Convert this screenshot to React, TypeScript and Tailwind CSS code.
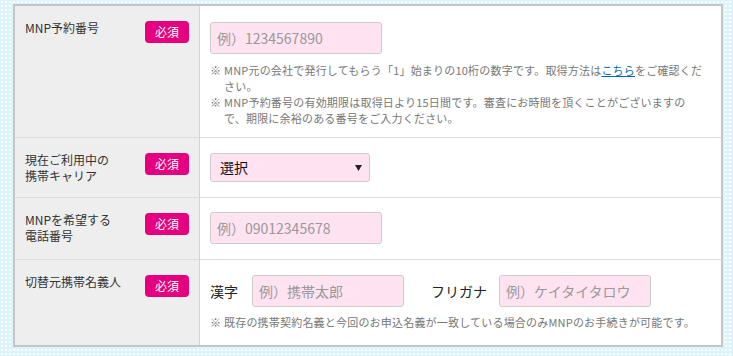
import React from "react";

const FONT = { fontFamily: '"Noto Sans CJK JP", "Noto Sans", sans-serif' };

function Badge() {
  return (
    <span className="mt-[1px] flex h-[22px] w-[44px] shrink-0 items-center justify-center rounded-[4px] bg-[#e4007f] text-[12px] leading-none text-white">
      必須
    </span>
  );
}

function Label({ children }: { children: React.ReactNode }) {
  return (
    <div className="flex w-[185px] shrink-0 items-start justify-between border-r border-[#d2d2d2] bg-[#eeeeee] px-[10px] pt-[14px]">
      <div className="text-[12px] leading-[16px] text-[#333333]">{children}</div>
      <Badge />
    </div>
  );
}

function TextInput({ placeholder, w }: { placeholder: string; w: string }) {
  return (
    <input
      readOnly
      placeholder={placeholder}
      className={`${w} h-[32px] rounded-[3px] border border-[#cccccc] bg-[#ffe3f1] pl-[6px] text-[14px] text-[#333] outline-none placeholder:text-[#999999]`}
    />
  );
}

function Note({ lines }: { lines: React.ReactNode[] }) {
  return (
    <div className="flex text-[11px] leading-[16px] tracking-[0.2px] text-[#777777]">
      <span className="w-[14px] shrink-0">※</span>
      <div>
        {lines.map((l, i) => (
          <div key={i} className="whitespace-nowrap">
            {l}
          </div>
        ))}
      </div>
    </div>
  );
}

export default function App() {
  return (
    <div
      style={FONT}
      className="h-[356px] w-full bg-[#dcf4fc] bg-[radial-gradient(circle,#ffffff_1px,transparent_1px)] bg-[length:4px_4px] pl-[13px] pt-[4px]"
    >
      <div className="w-[710px] border-2 border-[#c6c6c6] bg-white">
        {/* Row 1 */}
        <div className="flex border-b border-[#dcdcdc]">
          <Label>MNP予約番号</Label>
          <div className="flex-1 px-[10px] pb-[11px] pt-[16px]">
            <TextInput placeholder="例）1234567890" w="w-[172px]" />
            <div className="mt-[8px]">
              <Note
                lines={[
                  <>
                    MNP元の会社で発行してもらう「1」始まりの10桁の数字です。取得方法は
                    <a className="text-[#0068b7] underline">こちら</a>
                    をご確認くだ
                  </>,
                  "さい。",
                ]}
              />
              <Note
                lines={[
                  "MNP予約番号の有効期限は取得日より15日間です。審査にお時間を頂くことがございますの",
                  "で、期限に余裕のある番号をご入力ください。",
                ]}
              />
            </div>
          </div>
        </div>
        {/* Row 2 */}
        <div className="flex border-b border-[#dcdcdc]">
          <Label>
            現在ご利用中の
            <br />
            携帯キャリア
          </Label>
          <div className="flex-1 px-[10px] pb-[15px] pt-[15px]">
            <div className="flex h-[29px] w-[160px] items-center justify-between rounded-[3px] border border-[#cccccc] bg-[#ffe3f1] pl-[9px] pr-[7px]">
              <span className="text-[14px] text-[#111]">選択</span>
              <svg width="7" height="6" viewBox="0 0 7 6">
                <path d="M0 0 H7 L3.5 6 Z" fill="#222" />
              </svg>
            </div>
          </div>
        </div>
        {/* Row 3 */}
        <div className="flex border-b border-[#dcdcdc]">
          <Label>
            MNPを希望する
            <br />
            電話番号
          </Label>
          <div className="flex-1 px-[10px] pb-[15px] pt-[14px]">
            <TextInput placeholder="例）09012345678" w="w-[172px]" />
          </div>
        </div>
        {/* Row 4 */}
        <div className="flex">
          <Label>切替元携帯名義人</Label>
          <div className="flex-1 px-[10px] pb-[15px] pt-[15px]">
            <div className="flex items-center">
              <span className="mr-[14px] text-[14px] text-[#222]">漢字</span>
              <TextInput placeholder="例）携帯太郎" w="w-[152px]" />
              <span className="ml-[27px] mr-[12px] text-[14px] text-[#222]">フリガナ</span>
              <TextInput placeholder="例）ケイタイタロウ" w="w-[152px]" />
            </div>
            <div className="mt-[7px]">
              <Note
                lines={[
                  "既存の携帯契約名義と今回のお申込名義が一致している場合のみMNPのお手続きが可能です。",
                ]}
              />
            </div>
          </div>
        </div>
      </div>
    </div>
  );
}
